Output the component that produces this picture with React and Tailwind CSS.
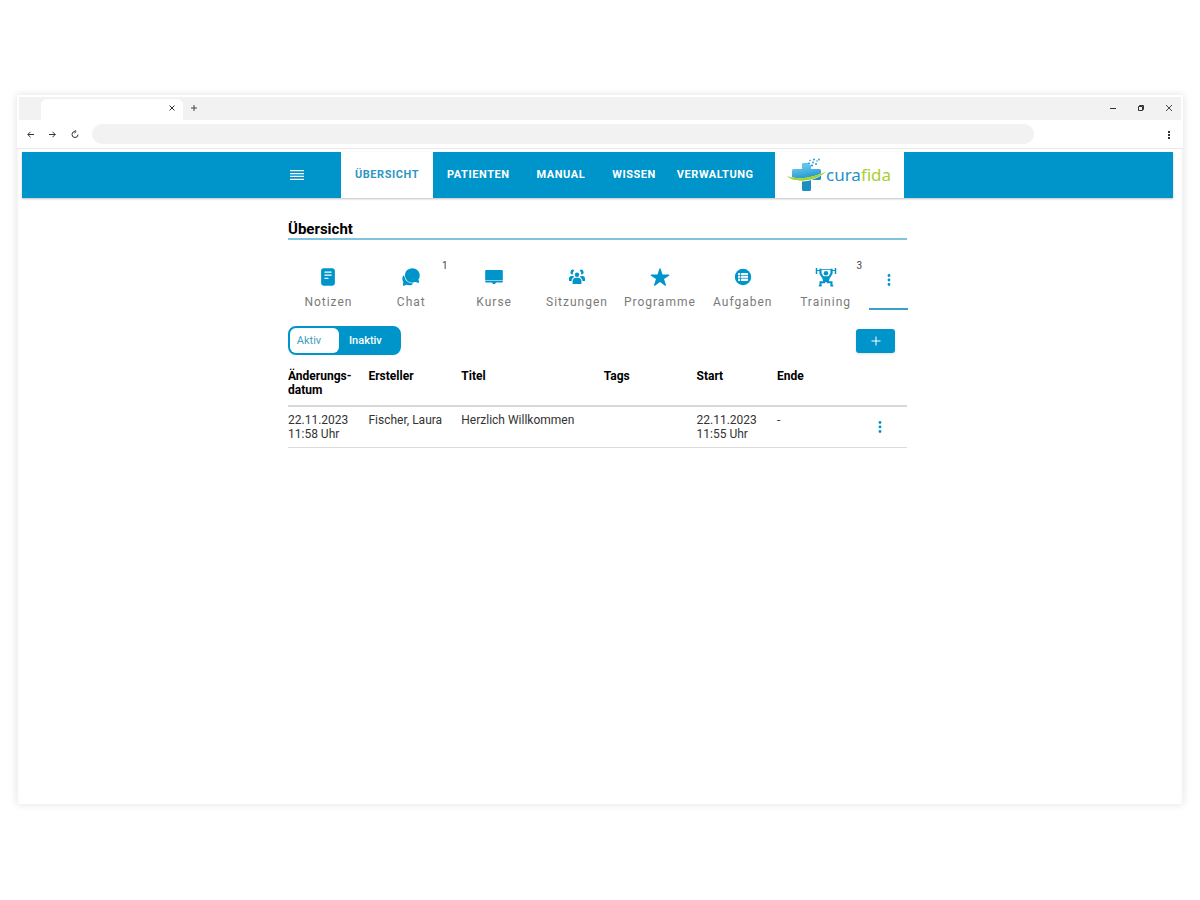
import { IoChatbubbles, IoReader, IoStar } from "react-icons/io5";

const navItems = [
  { name: "ÜBERSICHT", active: true },
  { name: "PATIENTEN" },
  { name: "MANUAL" },
  { name: "WISSEN" },
  { name: "VERWALTUNG" },
];

const sections = [
  { name: "Notizen", icon: <IoReader className="size-5" /> },
  { name: "Chat", icon: <IoChatbubbles className="size-5" />, badge: 1 },
  { name: "Kurse", icon: <DesktopIcon /> },
  { name: "Sitzungen", icon: <GroupIcon /> },
  { name: "Programme", icon: <IoStar className="size-5" /> },
  { name: "Aufgaben", icon: <ListIcon /> },
  { name: "Training", icon: <LifterIcon />, badge: 3 },
];

const notes = [
  {
    id: 1,
    changed: ["22.11.2023", "11:58 Uhr"],
    author: "Fischer, Laura",
    title: "Herzlich Willkommen",
    tags: "",
    start: ["22.11.2023", "11:55 Uhr"],
    end: "-",
  },
];

function DesktopIcon() {
  return (
    <svg viewBox="0 0 20 20" className="size-5" fill="currentColor">
      <path d="M2 3h16a.8.8 0 0 1 .8.8v9.4H1.200V3.800A.8.8 0 0 1 2 3z" />
      <path d="M1.200 13.700h17.600v1a.8.8 0 0 1-.8.8h-6l-1 1.500H9l-1-1.500H2a.8.8 0 0 1-.8-.8z" />
    </svg>
  );
}

function GroupIcon() {
  return (
    <svg viewBox="0 0 20 20" className="size-5" fill="currentColor">
      <circle cx="10" cy="7.800" r="2.200" />
      <path d="M5.600 17v-2.800c0-2 1.400-3.400 3.200-3.400h2.400c1.800 0 3.200 1.400 3.200 3.400V17z" />
      <path d="M3.600 4.600a2 2 0 0 1 3.600-1.200A4.500 4.500 0 0 0 5.800 7.500 2 2 0 0 1 3.600 4.600zM16.400 4.600a2 2 0 0 0-3.600-1.200 4.500 4.500 0 0 1 1.400 4.100 2 2 0 0 0 2.200-2.900z" />
      <path d="M2 14v-2.300c0-1.600 1-2.700 2.500-2.700h1.800l.8 1.100c-1.500.8-2.400 2-2.500 3.900zM18 14v-2.300c0-1.600-1-2.700-2.500-2.700h-1.800l-.8 1.100c1.500.8 2.400 2 2.500 3.900z" />
    </svg>
  );
}

function ListIcon() {
  return (
    <svg viewBox="0 0 20 20" className="size-5">
      <circle cx="10" cy="10" r="8.200" fill="currentColor" />
      <rect x="5" y="6" width="10" height="8" rx="0.800" fill="#fff" />
      <path d="M5 8.600h10M5 11.300h10M7.500 6v8" stroke="currentColor" strokeWidth="0.800" />
    </svg>
  );
}

function LifterIcon() {
  return (
    <svg viewBox="0 0 22 20" className="h-5 w-[22px]" fill="none" stroke="currentColor">
      <path d="M1.500 1v6M20.500 1v6" strokeWidth="1.500" />
      <path d="M1.500 3.500h4M16.500 3.500h4" strokeWidth="1" />
      <path
        d="M5.500 1.800v4.700l2.500 4M16.500 1.800v4.700l-2.500 4"
        strokeWidth="2.200"
        strokeLinejoin="round"
      />
      <path d="M6 2.500h10" strokeWidth="0.800" />
      <circle cx="11" cy="6.200" r="2.300" fill="currentColor" stroke="none" />
      <path d="M6.800 9.300h8.400l-1.600 6H8.400z" fill="currentColor" stroke="none" />
      <path d="M10 15.200H5.500v3.500M12 15.200h4.500v3.500" strokeWidth="2" />
      <path d="M3.800 18.600h2.700M15.500 18.600h2.700" strokeWidth="1.600" />
    </svg>
  );
}

function DotsIcon() {
  return (
    <svg viewBox="0 0 4 14" className="h-[14px] w-1" fill="currentColor">
      <circle cx="2" cy="2.500" r="1.400" />
      <circle cx="2" cy="7" r="1.400" />
      <circle cx="2" cy="11.500" r="1.400" />
    </svg>
  );
}

function Logo() {
  return (
    <a
      href="#"
      aria-label="curafida"
      className="flex h-full w-[129px] items-center bg-white pl-3"
    >
      <svg viewBox="0 0 39 36" className="h-9 w-[39px] shrink-0">
        <defs>
          <linearGradient id="cross" x1="0" y1="0" x2="0.2" y2="1">
            <stop offset="0.2" stopColor="#5ec5ec" />
            <stop offset="0.7" stopColor="#1b8fc2" />
          </linearGradient>
        </defs>
        <path
          d="M16 6h5l1 2h2v4h8.500Q34 12 34 13.500v8q0 1.500-1.500 1.500H24v9.500q0 1.500-1.500 1.500h-6q-1.500 0-1.500-1.500V23H6.500Q5 23 5 21.500v-8Q5 12 6.500 12H15V7.500Q15 6 16 6z"
          fill="url(#cross)"
        />
        <path d="M0 18.500c11 5.500 27 2 39-4.500C31 24.500 8 29 0 18.500z" fill="#fff" />
        <path d="M0 19c12 4.500 27 1.500 39-4.500C31 23.500 8 27.500 0 19z" fill="#a5d12c" />
        <g fill="#2c9dcd">
          <circle cx="22" cy="6.500" r="1.100" />
          <circle cx="25" cy="8.500" r="1.100" />
          <circle cx="23" cy="3.500" r="0.800" />
          <circle cx="26" cy="5.500" r="0.900" />
          <circle cx="29" cy="7" r="1" />
          <circle cx="27" cy="2.500" r="1" />
          <circle cx="30" cy="4" r="0.800" />
          <circle cx="32" cy="2.500" r="0.900" />
        </g>
      </svg>
      <span className="font-['Noto_Sans'] text-[17px] leading-5 text-[#1c93c6]">
        cura<span className="text-[#a9cf2f]">fida</span>
      </span>
    </a>
  );
}

function BrowserChrome() {
  return (
    <div className="border-b border-[#e8e8e8] bg-white p-0.5 pb-1 text-[#333]">
      <div className="flex h-[23px] items-end bg-[#f2f2f2]">
        <div className="ml-[22px] flex h-[21px] w-[142px] items-center justify-end rounded-t-md bg-white pr-2 pb-1">
          <button aria-label="Tab schließen">
            <svg viewBox="0 0 6 6" className="size-[6px]" stroke="currentColor">
              <path d="M.5.5l5 5M5.500.5l-5 5" />
            </svg>
          </button>
        </div>
        <button aria-label="Neuer Tab" className="flex h-[21px] items-center pb-1 pl-2">
          <svg viewBox="0 0 6 6" className="size-[6px]" stroke="currentColor">
            <path d="M3 0v6M0 3h6" strokeWidth="0.900" />
          </svg>
        </button>
        <div className="ml-auto flex h-[21px] items-center gap-[22px] pr-[9px] pb-1">
          <button aria-label="Minimieren">
            <svg viewBox="0 0 6 6" className="size-[6px]" stroke="currentColor">
              <path d="M0 3.500h6" />
            </svg>
          </button>
          <button aria-label="Verkleinern">
            <svg viewBox="0 0 6 6" className="size-[6px]" fill="none" stroke="currentColor">
              <path d="M.5 1.500h4v4h-4zM1.500 1V.5h4v4H5" />
            </svg>
          </button>
          <button aria-label="Schließen">
            <svg viewBox="0 0 6 6" className="size-[6px]" stroke="currentColor">
              <path d="M0 0l6 6M6 0l-6 6" strokeWidth="0.900" />
            </svg>
          </button>
        </div>
      </div>
      <div className="flex h-6 items-end pl-2">
        <div className="flex h-5 w-[65px] items-center gap-[15px]">
          <button aria-label="Zurück">
            <svg viewBox="0 0 7 7" className="size-[7px]" fill="none" stroke="currentColor">
              <path d="M7 3.500H.8M3.500.8L.8 3.500l2.700 2.700" />
            </svg>
          </button>
          <button aria-label="Vor">
            <svg viewBox="0 0 7 7" className="size-[7px]" fill="none" stroke="currentColor">
              <path d="M0 3.500h6.200M3.500.8l2.700 2.700-2.700 2.700" />
            </svg>
          </button>
          <button aria-label="Neu laden">
            <svg viewBox="0 0 8 8" className="size-2" fill="none" stroke="currentColor">
              <path d="M4 1.500a3 3 0 1 0 3 3M3.500 0l1.700 1.500L3.500 3" />
            </svg>
          </button>
        </div>
        <input
          aria-label="Adresse"
          className="h-5 w-[942px] min-w-0 rounded-full bg-[#f2f2f2] px-3 text-xs outline-none"
        />
        <button aria-label="Menü" className="ml-auto flex h-[18px] items-center pr-[10px]">
          <svg viewBox="0 0 4 8" className="h-2 w-1" fill="currentColor">
            <path d="M1 0h2v2H1zM1 3h2v2H1zM1 6h2v2H1z" />
          </svg>
        </button>
      </div>
    </div>
  );
}

function Header() {
  return (
    <header className="flex h-[46px] justify-center bg-[#0095ca] shadow-[0_1px_2px_rgba(0,0,0,0.25)]">
      <div className="flex w-full max-w-[619px] items-center">
        <button aria-label="Menü öffnen" className="w-[53px] pl-0.5 text-white">
          <svg viewBox="0 0 14 10" className="h-[10px] w-[14px]" fill="currentColor">
            <path d="M0 0h14v1.300H0zM0 2.900h14v1.300H0zM0 5.800h14v1.300H0zM0 8.700h14v1.300H0z" />
          </svg>
        </button>
        <nav className="flex h-full flex-1 text-[11px] font-bold tracking-wider">
          {navItems.map((item) => (
            <a
              key={item.name}
              href="#"
              className={`flex items-center pl-[14px] last:pl-2 ${
                item.active ? "bg-white pr-[14px] text-[#2f96bf]" : "pr-[13px] text-white"
              }`}
            >
              {item.name}
            </a>
          ))}
        </nav>
        <Logo />
        <div className="w-[3px]" />
      </div>
    </header>
  );
}

function SectionTabs() {
  return (
    <nav className="-mx-px flex h-[70px] text-[#0095ca]">
      {sections.map((section) => (
        <a
          key={section.name}
          href="#"
          className="relative flex flex-1 basis-0 flex-col items-center pt-[26px]"
        >
          <span className="flex h-[22px] items-center">{section.icon}</span>
          <span className="mt-1.5 text-xs leading-4 tracking-[1px] text-[#7a7a7a]">
            {section.name}
          </span>
          {section.badge && (
            <span className="absolute top-5 right-[5px] text-[10px] leading-3 text-[#444]">
              {section.badge}
            </span>
          )}
        </a>
      ))}
      <button
        aria-label="Weitere Bereiche"
        className="ml-0.5 flex w-[39px] items-center justify-center border-b-2 border-[#3c9fc6] pt-3"
      >
        <DotsIcon />
      </button>
    </nav>
  );
}

function Toolbar() {
  return (
    <div className="mt-4 flex items-center justify-between pr-3">
      <div className="flex h-[29px] w-[113px] rounded-lg border-2 border-[#0095ca] bg-[#0095ca] text-[11px]">
        <button className="w-[49px] rounded-md bg-white pt-0.5 pr-[11px] text-[#3f9dc2]">
          Aktiv
        </button>
        <button className="pt-0.5 pl-[10px] font-medium text-white">Inaktiv</button>
      </div>
      <button
        aria-label="Notiz hinzufügen"
        className="flex h-6 w-[39px] items-center justify-center rounded-[3px] bg-[#0095ca] text-white shadow"
      >
        <svg viewBox="0 0 10 10" className="size-[10px]" stroke="currentColor">
          <path d="M5 .5v9M.5 5h9" />
        </svg>
      </button>
    </div>
  );
}

function NotesTable() {
  return (
    <table className="mt-[14px] w-full table-fixed text-left text-xs leading-[14px]">
      <colgroup>
        <col className="w-[13%]" />
        <col className="w-[15%]" />
        <col className="w-[23%]" />
        <col className="w-[15%]" />
        <col className="w-[13%]" />
        <col className="w-[12%]" />
        <col />
      </colgroup>
      <thead>
        <tr className="h-[37px] border-b-2 border-[#d9d9d9] align-top text-black">
          <th>
            Änderungs-
            <br />
            datum
          </th>
          <th>Ersteller</th>
          <th>Titel</th>
          <th>Tags</th>
          <th>Start</th>
          <th>Ende</th>
          <th aria-label="Aktionen" />
        </tr>
      </thead>
      <tbody>
        {notes.map((note) => (
          <tr key={note.id} className="border-b border-[#dcdcdc] align-top text-[#333]">
            <td className="pt-1.5 pb-1.5">
              {note.changed[0]}
              <br />
              {note.changed[1]}
            </td>
            <td className="pt-1.5">{note.author}</td>
            <td className="pt-1.5">{note.title}</td>
            <td className="pt-1.5">{note.tags}</td>
            <td className="pt-1.5">
              {note.start[0]}
              <br />
              {note.start[1]}
            </td>
            <td className="pt-1.5">{note.end}</td>
            <td className="pr-[25px] text-right align-middle">
              <button aria-label="Aktionen" className="align-middle text-[#0095ca]">
                <DotsIcon />
              </button>
            </td>
          </tr>
        ))}
      </tbody>
    </table>
  );
}

export default function App() {
  return (
    <div className="flex min-h-screen flex-col bg-white px-[17px] pt-[95px] pb-24 font-[Roboto,sans-serif]">
      <div className="flex flex-1 flex-col bg-white shadow-[0_0_8px_rgba(0,0,0,0.12)]">
        <BrowserChrome />
        <div className="flex flex-1 flex-col border-x-2 border-[#f8f8f8] pt-[3px] pr-2 pl-[3px]">
          <Header />
          <main className="mx-auto w-full max-w-[619px] pt-[22px]">
            <h1 className="border-b-2 border-[#7fc3df] text-[15px] leading-[18px] font-bold text-black">
              Übersicht
            </h1>
            <SectionTabs />
            <Toolbar />
            <NotesTable />
          </main>
        </div>
      </div>
    </div>
  );
}
